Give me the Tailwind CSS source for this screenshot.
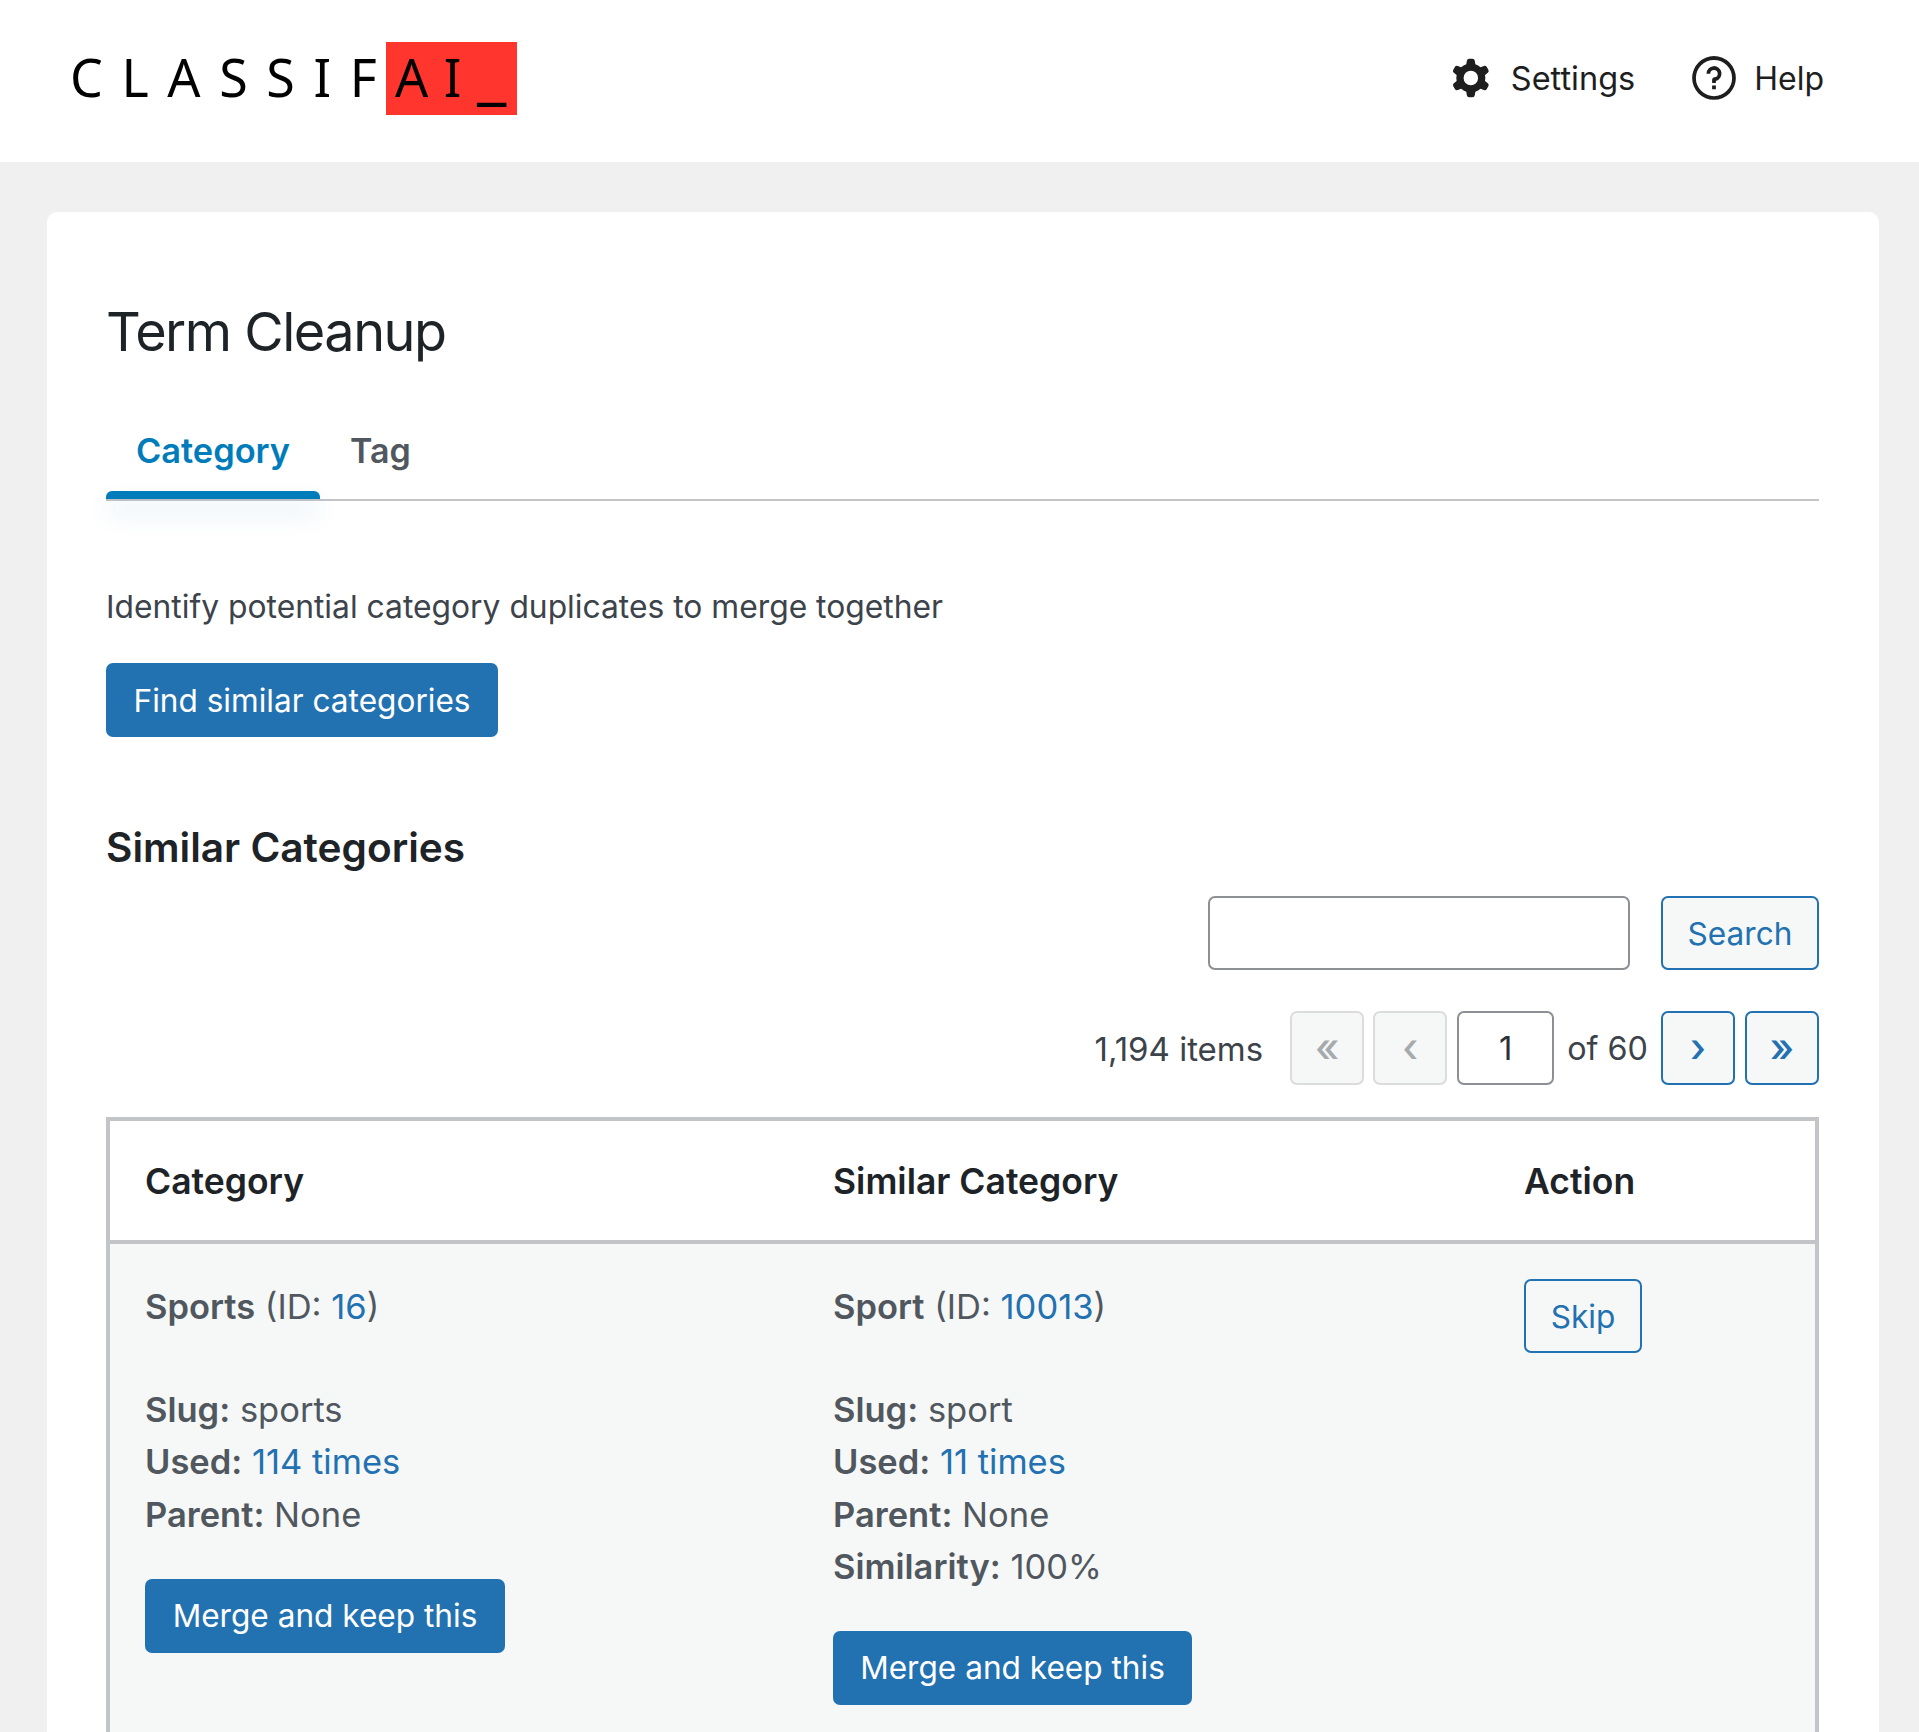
<!DOCTYPE html>
<html lang="en">
<head>
  <meta charset="UTF-8" />
  <title>Term Cleanup</title>
  <script src="https://cdn.jsdelivr.net/npm/@tailwindcss/browser@4"></script>
</head>
<body class="h-[1732px] overflow-hidden bg-[#f0f0f1] font-['Inter',sans-serif] text-[31.8px] text-[#3c434a]">
  <!-- top bar -->
  <header class="flex h-[162px] items-center justify-between bg-white pb-[6px] pl-[70px] pr-[95px]">
    <div class="flex h-[73px] font-['Noto_Sans',sans-serif] text-[52px] leading-[70px] text-black">
      <span class="w-[316px] tracking-[18.6px]">CLASSIF</span>
      <span class="relative h-[73px] w-[131px] whitespace-nowrap bg-[#ff352e] pl-[9px] tracking-[15.6px]">AI<span class="absolute left-[91px] top-[-4px] text-[66px] leading-none tracking-normal">_</span></span>
    </div>
    <nav class="flex items-center text-[#1e1e1e]">
      <svg class="h-[58px] w-[58px]" viewBox="0 0 24 24" fill="currentColor"><path fill-rule="evenodd" clip-rule="evenodd" d="M10.289 4.836A1 1 0 0 1 11.275 4h1.306a1 1 0 0 1 .987.836l.244 1.466c.787.26 1.503.679 2.108 1.218l1.393-.522a1 1 0 0 1 1.216.437l.653 1.13a1 1 0 0 1-.23 1.273l-1.148.944a6.025 6.025 0 0 1 0 2.435l1.149.946a1 1 0 0 1 .23 1.272l-.653 1.13a1 1 0 0 1-1.216.437l-1.394-.522c-.605.54-1.32.958-2.108 1.218l-.244 1.466a1 1 0 0 1-.987.836h-1.306a1 1 0 0 1-.986-.836l-.244-1.466a5.995 5.995 0 0 1-2.108-1.218l-1.394.522a1 1 0 0 1-1.217-.436l-.653-1.131a1 1 0 0 1 .23-1.272l1.149-.946a6.026 6.026 0 0 1 0-2.435l-1.148-.944a1 1 0 0 1-.23-1.272l.653-1.131a1 1 0 0 1 1.217-.437l1.393.522a5.994 5.994 0 0 1 2.108-1.218l.244-1.466ZM14.929 12a3 3 0 1 1-6 0 3 3 0 0 1 6 0Z"/></svg>
      <a href="#" class="ml-[11px] mr-[49px] pt-[2px] text-[32.5px]">Settings</a>
      <svg class="h-[60px] w-[60px]" viewBox="0 0 24 24" fill="currentColor"><path d="M12 4.75a7.25 7.25 0 100 14.5 7.25 7.25 0 000-14.5zM3.25 12a8.75 8.75 0 1117.5 0 8.75 8.75 0 01-17.5 0zM12 8.75a1.5 1.5 0 01.167 2.99c-.465.052-.917.44-.917 1.01V14h1.5v-.845A3 3 0 109 10.25h1.5a1.5 1.5 0 011.5-1.5zM11.25 15v1.5h1.5V15h-1.5z"/></svg>
      <a href="#" class="ml-[10px] pt-[2px] text-[32px]">Help</a>
    </nav>
  </header>

  <main class="pl-[47px] pr-[40px] pt-[50px]">
    <section class="rounded-t-[10px] bg-white pl-[59px] pr-[60px] pt-[92px]">
      <h1 class="text-[54px] leading-[56px] tracking-[-1.5px] text-[#1d2327]">Term Cleanup</h1>

      <div class="mt-[50px] flex h-[91px] border-b-2 border-[#c3c4c7]">
        <a href="#" class="relative h-[89px] w-[214px] pt-[23px] text-center text-[34.4px] font-semibold leading-[36px] text-[#007cba]">
          Category
          <span class="absolute bottom-0 left-0 h-[8px] w-full rounded-t-[6px] bg-[#007cba] shadow-[0_14px_24px_rgba(34,113,177,0.16)]"></span>
        </a>
        <a href="#" class="ml-[30px] pt-[23px] text-[34px] font-semibold leading-[36px] text-[#50575e]">Tag</a>
      </div>

      <p class="mt-[86px] leading-[40px]">Identify potential category duplicates to merge together</p>
      <button class="mt-[36px] h-[74px] w-[392px] rounded-[7px] bg-[#2271b1] pt-px text-[31.6px] text-white">Find similar categories</button>

      <h2 class="mt-[89px] text-[40.6px] font-semibold leading-[44px] text-[#1d2327]">Similar Categories</h2>

      <div class="mt-[26px] flex justify-end gap-[31px]">
        <input type="text" class="h-[74px] w-[422px] rounded-[7px] border-2 border-[#8c8f94] bg-white" />
        <button class="h-[74px] w-[158px] rounded-[7px] border-2 border-[#2271b1] bg-[#f6f7f7] pt-[2px] text-[31.6px] text-[#2271b1]">Search</button>
      </div>

      <div class="mt-[41px] flex items-center justify-end text-[33px]">
        <span class="mr-[27px] pt-[3px]">1,194 items</span>
        <span class="mr-[9px] flex h-[74px] w-[74px] items-center justify-center rounded-[7px] border-2 border-[#dcdcde] bg-[#f6f7f7] text-[40px] font-medium leading-none text-[#a7aaad]">«</span>
        <span class="mr-[10px] flex h-[74px] w-[74px] items-center justify-center rounded-[7px] border-2 border-[#dcdcde] bg-[#f6f7f7] text-[40px] font-medium leading-none text-[#a7aaad]">‹</span>
        <input type="text" value="1" class="h-[74px] w-[97px] rounded-[7px] border-2 border-[#8c8f94] bg-white text-center text-[#2c3338]" />
        <span class="mx-[13px] pt-[3px] text-[32.3px]">of 60</span>
        <a href="#" class="mr-[10px] flex h-[74px] w-[74px] items-center justify-center rounded-[7px] border-2 border-[#2271b1] bg-[#f6f7f7] text-[40px] font-medium leading-none text-[#2271b1]">›</a>
        <a href="#" class="flex h-[74px] w-[74px] items-center justify-center rounded-[7px] border-2 border-[#2271b1] bg-[#f6f7f7] text-[40px] font-medium leading-none text-[#2271b1]">»</a>
      </div>

      <div class="mt-[32px] border-x-4 border-t-4 border-[#c3c4c7]">
        <div class="grid h-[123px] grid-cols-[687px_691px_1fr] items-center border-b-4 border-[#c3c4c7] bg-white pt-[2px] text-[35.5px] font-semibold text-[#1d2327]">
          <div class="pl-[35px]">Category</div>
          <div class="pl-[36px]">Similar Category</div>
          <div class="pl-[36px]">Action</div>
        </div>
        <div class="grid h-[600px] grid-cols-[687px_691px_1fr] bg-[#f6f7f7] pt-[37px] text-[34.5px] leading-[52.5px] text-[#50575e]">
          <div class="pl-[35px]">
            <p class="mb-[50px]"><b class="font-semibold">Sports</b> (ID: <a href="#" class="text-[#2271b1]">16</a>)</p>
            <p><b class="font-semibold">Slug:</b> sports</p>
            <p><b class="font-semibold">Used:</b> <a href="#" class="text-[#2271b1]">114 times</a></p>
            <p><b class="font-semibold">Parent:</b> None</p>
            <button class="mt-[38px] block h-[74px] w-[360px] rounded-[7px] bg-[#2271b1] pt-px text-[31.6px] text-white">Merge and keep this</button>
          </div>
          <div class="pl-[36px]">
            <p class="mb-[50px]"><b class="font-semibold">Sport</b> (ID: <a href="#" class="text-[#2271b1]">10013</a>)</p>
            <p><b class="font-semibold">Slug:</b> sport</p>
            <p><b class="font-semibold">Used:</b> <a href="#" class="text-[#2271b1]">11 times</a></p>
            <p><b class="font-semibold">Parent:</b> None</p>
            <p><b class="font-semibold">Similarity:</b> 100%</p>
            <button class="mt-[37px] block h-[74px] w-[359px] rounded-[7px] bg-[#2271b1] pt-px text-[31.6px] text-white">Merge and keep this</button>
          </div>
          <div class="pl-[36px]">
            <button class="-mt-[2px] block h-[74px] w-[118px] rounded-[7px] border-2 border-[#2271b1] bg-[#f6f7f7] pt-[2px] text-[31.6px] text-[#2271b1]">Skip</button>
          </div>
        </div>
      </div>
    </section>
  </main>
</body>
</html>
